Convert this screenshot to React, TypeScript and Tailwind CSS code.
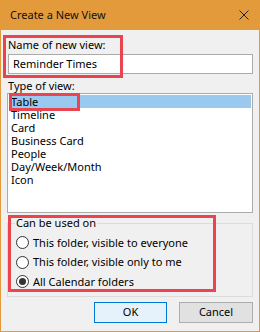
import React from "react";

const items = ["Table", "Timeline", "Card", "Business Card", "People", "Day/Week/Month", "Icon"];

function Radio({ checked, label }: { checked?: boolean; label: string }) {
  return (
    <div className="flex items-center h-[19.5px]">
      <div className="w-[13px] h-[13px] rounded-full border border-[#333333] bg-white flex items-center justify-center">
        {checked && <div className="w-[7px] h-[7px] rounded-full bg-[#333333]" />}
      </div>
      <span className="ml-[4px] leading-[14px]">{label}</span>
    </div>
  );
}

export default function App() {
  return (
    <div
      className="w-[260px] h-[332px] bg-[#E39A3B] flex flex-col text-[11px] text-black relative"
      style={{ fontFamily: '"Noto Sans", "Open Sans", sans-serif' }}
    >
      <div className="h-[30px] flex items-center justify-between pl-[10px] pr-[10px] shrink-0">
        <span className="text-[11px] leading-[16px] text-[#111]">Create a New View</span>
        <svg width="10" height="10" viewBox="0 0 10 10" className="mr-[1px]">
          <path d="M0.5 0.5 L9.5 9.5 M9.5 0.5 L0.5 9.5" stroke="#222" strokeWidth="1" fill="none" />
        </svg>
      </div>
      <div className="flex-1 mx-[1px] mb-[1px] bg-[#F0F0F0] px-[6px] flex flex-col">
        <div className="leading-[16px] mt-[7px] pl-[1px]">Name of new view:</div>
        <div className="mt-[1px] h-[20px] border border-[#ABABAB] bg-white flex items-center pl-[4px] ml-[1px]">
          Reminder Times
        </div>
        <div className="leading-[14px] mt-[5px] pl-[1px]">Type of view:</div>
        <div className="h-[120px] border border-[#ABABAB] bg-white pt-[1px] px-[1px]">
          {items.map((it, i) => (
            <div
              key={it}
              className={`h-[13px] leading-[13px] pl-[2px] ${i === 0 ? "bg-[#99C9EF]" : ""}`}
            >
              {it}
            </div>
          ))}
        </div>
        <fieldset className="mt-[3px] h-[81px] border border-[#DCDCDC] pl-[8px] pb-[4px]">
          <legend className="-ml-[1px] px-[1px] leading-[14px]">Can be used on</legend>
          <div className="flex flex-col mt-[3px]">
            <Radio label="This folder, visible to everyone" />
            <Radio label="This folder, visible only to me" />
            <Radio checked label="All Calendar folders" />
          </div>
        </fieldset>
        <div className="flex justify-end gap-[12px] mt-[5px]">
          <div className="w-[73px] h-[21px] border border-[#0078D7] bg-[#E5F1FB] flex items-center justify-center">
            OK
          </div>
          <div className="w-[74px] h-[21px] border border-[#ADADAD] bg-[#E1E1E1] flex items-center justify-center">
            Cancel
          </div>
        </div>
      </div>
      <div className="absolute left-[3px] top-[35px] w-[120px] h-[43px] border-[3px] border-[#EA4450]" />
      <div className="absolute left-[9px] top-[93px] w-[71px] h-[18px] border-[3px] border-[#EA4450]" />
      <div className="absolute left-[8px] top-[215px] w-[208px] h-[77px] border-[3px] border-[#EA4450]" />
    </div>
  );
}
